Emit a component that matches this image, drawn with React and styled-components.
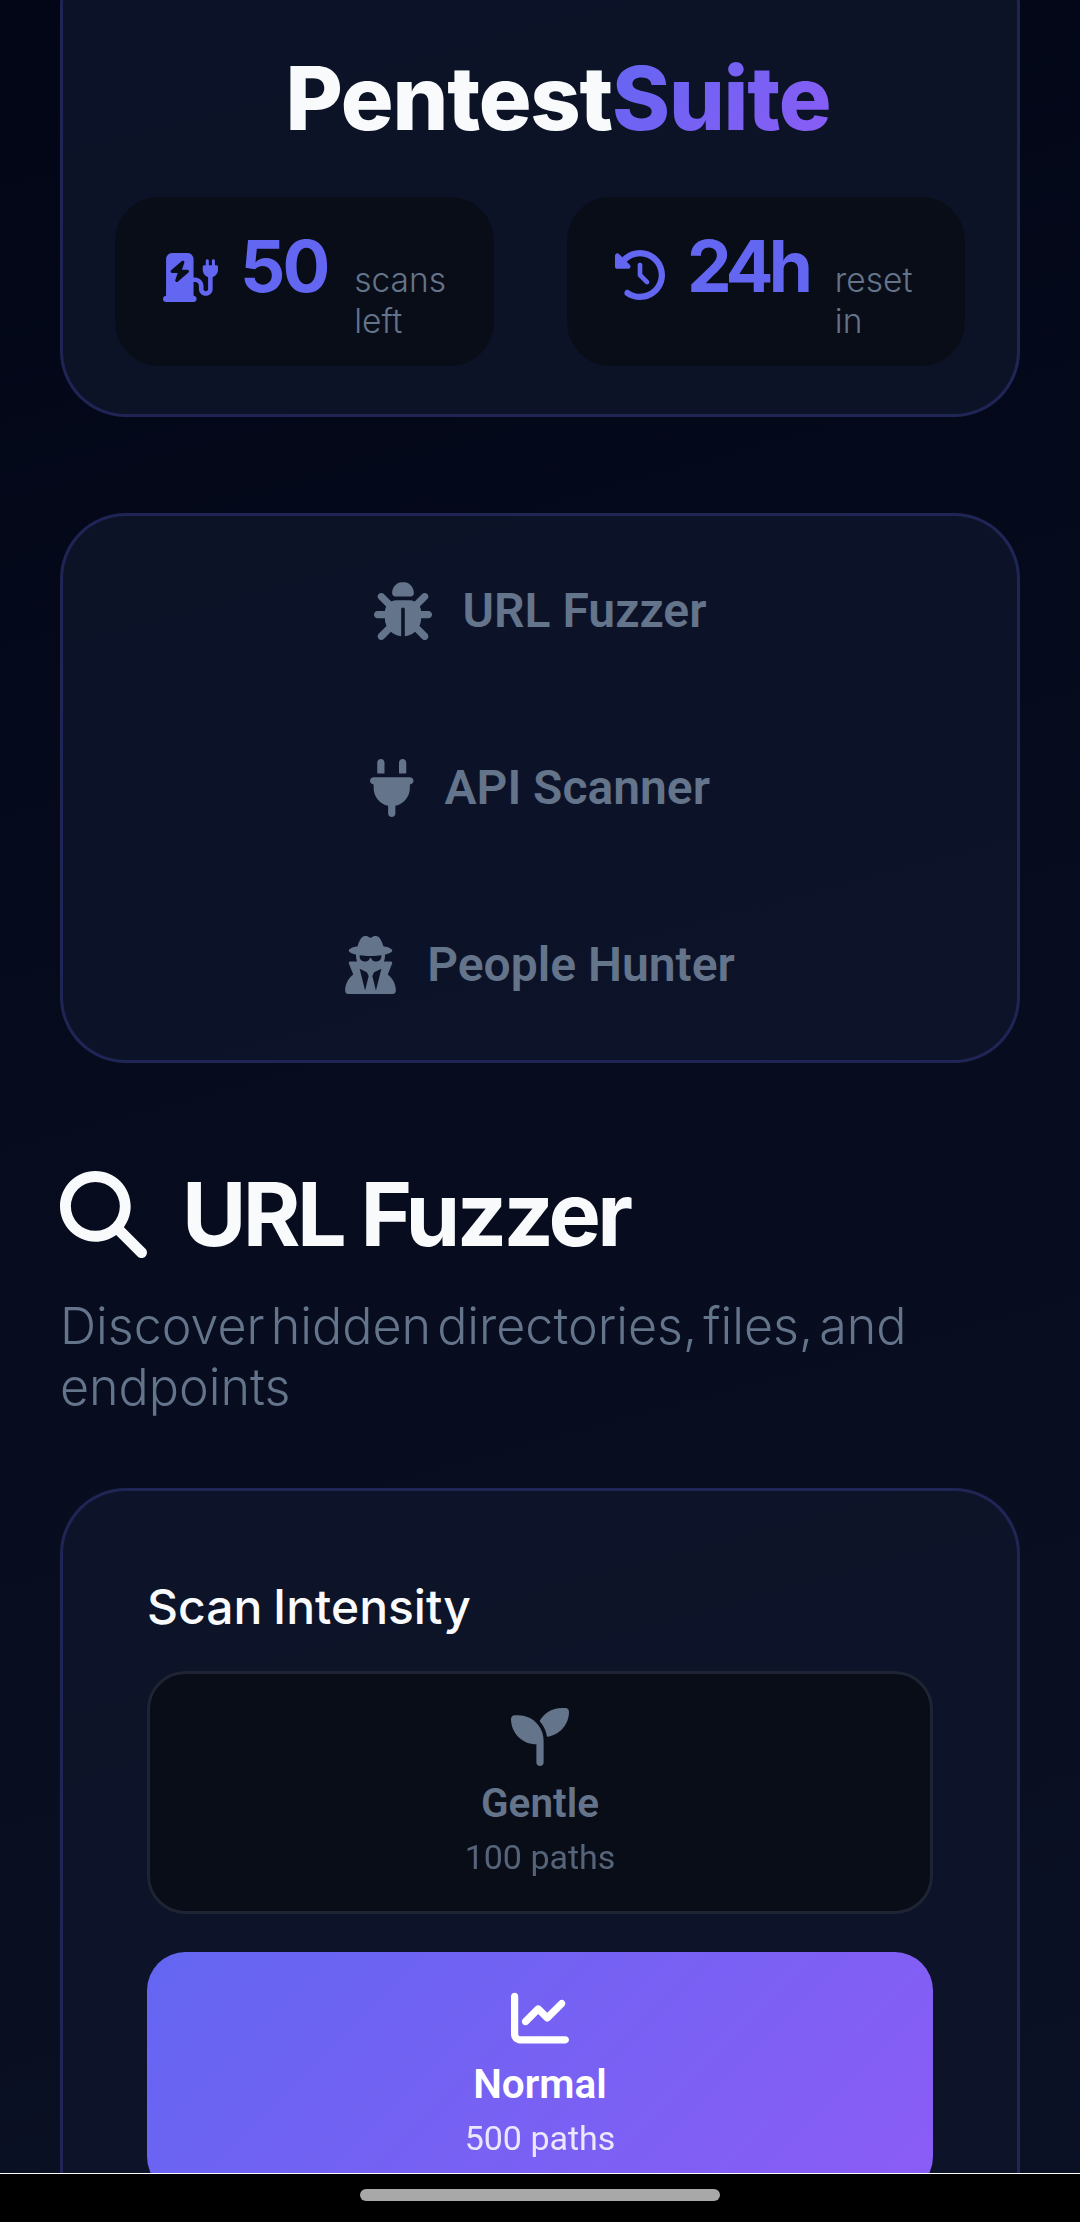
import React from 'react'
import styled, { createGlobalStyle } from 'styled-components'
import {
    FaBug,
    FaChargingStation,
    FaChartLine,
    FaClockRotateLeft,
    FaMagnifyingGlass,
    FaPlug,
    FaSeedling,
    FaUserSecret,
} from 'react-icons/fa6'

const GlobalStyle = createGlobalStyle`
    html, body {
        margin: 0;
        padding: 0;
        background: #000;
    }
    * {
        box-sizing: border-box;
    }
`

const Screen = styled.div`
    width: 1080px;
    height: 2222px;
    display: flex;
    flex-direction: column;
    overflow: hidden;
    font-family: "Inter", "Liberation Sans", sans-serif;
`

const Viewport = styled.main`
    height: 2173px;
    overflow: hidden;
    padding: 0 60px;
    background: linear-gradient(165deg, #020617 0%, #0b1124 100%);
`

const Card = styled.section`
    border: 3px solid rgba(99, 102, 241, 0.22);
    border-radius: 66px;
    background: rgba(14, 21, 42, 0.85);
`

const HeaderCard = styled(Card)`
    margin-top: -60px;
    height: 477px;
    padding: 102px 52px 0;
`

const Title = styled.h1`
    margin: 0;
    padding-left: 36px;
    text-align: center;
    font-size: 88px;
    line-height: 106px;
    font-weight: 800;
    letter-spacing: -1.2px;
    color: #f8fafc;
`

const Accent = styled.span`
    background: linear-gradient(135deg, #6366f1, #8b5cf6);
    -webkit-background-clip: text;
    background-clip: text;
    color: transparent;
`

const Stats = styled.div`
    display: grid;
    grid-template-columns: 379fr 398fr;
    gap: 73px;
    margin-top: 46px;
`

const Stat = styled.div`
    height: 169px;
    border-radius: 44px;
    background: #090d18;
    display: flex;
    align-items: flex-start;
    padding: 26px 0 0 48px;
    color: #6366f1;
`

const StatIcon = styled.span`
    display: flex;
    margin: 27px 22px 0 0;
`

const StatValue = styled.span`
    font-size: 71px;
    line-height: 86px;
    font-weight: 700;
    letter-spacing: ${props => props.$tracking}px;
    margin-right: 27px;
`

const StatLabel = styled.span`
    font-size: 33.5px;
    line-height: 41px;
    font-weight: 300;
    color: #64748b;
    width: 92px;
    margin-top: 37px;
`

const NavCard = styled(Card)`
    margin-top: 96px;
    height: 550px;
    padding: 6px 0;
    display: flex;
    flex-direction: column;
`

const NavItem = styled.div`
    height: 177px;
    display: flex;
    align-items: center;
    justify-content: center;
    gap: 31px;
    font-family: "Roboto", sans-serif;
    font-size: 48px;
    font-weight: 600;
    color: #64748b;

    svg {
        height: 58px;
        width: ${props => props.$iconWidth}px;
    }
`

const Heading = styled.h2`
    margin: 108px 0 0;
    display: flex;
    align-items: center;
    gap: 35px;
    font-size: 88px;
    line-height: 87px;
    font-weight: 700;
    letter-spacing: -3.6px;
    color: #f8fafc;
`

const Subtitle = styled.p`
    margin: 37px 0 0;
    font-size: 50.2px;
    line-height: 61px;
    font-weight: 300;
    word-spacing: -8px;
    color: #64748b;
`

const ScanCard = styled(Card)`
    margin-top: 71px;
    height: 900px;
    padding: 88px 84px;
`

const ScanLabel = styled.h3`
    margin: 0 0 36px;
    font-size: 48px;
    line-height: 56px;
    font-weight: 500;
    word-spacing: -2px;
    color: #f8fafc;
`

const Options = styled.div`
    display: flex;
    flex-direction: column;
    gap: 38px;
`

const Option = styled.div`
    height: 243px;
    border-radius: 38.5px;
    display: flex;
    flex-direction: column;
    align-items: center;
    justify-content: center;
    font-family: "Roboto", sans-serif;
    color: ${props => (props.$active ? '#fff' : '#64748b')};
    background: ${props => (props.$active ? 'linear-gradient(135deg, #6366f1, #8b5cf6)' : '#090d18')};
    border: ${props => (props.$active ? 'none' : '3px solid #1e2433')};
`

const OptionName = styled.span`
    margin-top: 14px;
    font-size: 40.5px;
    line-height: 46px;
    font-weight: 600;
`

const OptionPaths = styled.span`
    margin-top: 11px;
    font-size: 34px;
    line-height: 40px;
    opacity: 0.85;
`

const NavBar = styled.footer`
    flex: 1;
    background: #000;
    border-top: 1px solid #fff;
    display: flex;
    justify-content: center;
    padding-top: 15px;
`

const Handle = styled.div`
    width: 360px;
    height: 12px;
    border-radius: 6px;
    background: #a8a8a8;
`

const navItems = [
    { name: 'URL Fuzzer', Icon: FaBug, iconWidth: 58 },
    { name: 'API Scanner', Icon: FaPlug, iconWidth: 43.5 },
    { name: 'People Hunter', Icon: FaUserSecret, iconWidth: 51 },
]

const options = [
    { name: 'Gentle', paths: '100 paths', Icon: FaSeedling },
    { name: 'Normal', paths: '500 paths', Icon: FaChartLine, active: true },
]

export default function App() {
    return (
        <Screen>
            <GlobalStyle />
            <Viewport>
                <HeaderCard>
                    <Title>Pentest<Accent>Suite</Accent></Title>
                    <Stats>
                        <Stat>
                            <StatIcon><FaChargingStation size={55} /></StatIcon>
                            <StatValue $tracking={-3}>50</StatValue>
                            <StatLabel>scans left</StatLabel>
                        </Stat>
                        <Stat>
                            <StatIcon><FaClockRotateLeft size={50} /></StatIcon>
                            <StatValue $tracking={-5}>24h</StatValue>
                            <StatLabel>reset in</StatLabel>
                        </Stat>
                    </Stats>
                </HeaderCard>

                <NavCard>
                    {navItems.map(({ name, Icon, iconWidth }) => (
                        <NavItem key={name} $iconWidth={iconWidth}>
                            <Icon />
                            {name}
                        </NavItem>
                    ))}
                </NavCard>

                <Heading><FaMagnifyingGlass size={87} />URL Fuzzer</Heading>
                <Subtitle>Discover hidden directories, files, and endpoints</Subtitle>

                <ScanCard>
                    <ScanLabel>Scan Intensity</ScanLabel>
                    <Options>
                        {options.map(({ name, paths, Icon, active }) => (
                            <Option key={name} $active={active}>
                                <Icon size={58} />
                                <OptionName>{name}</OptionName>
                                <OptionPaths>{paths}</OptionPaths>
                            </Option>
                        ))}
                    </Options>
                </ScanCard>
            </Viewport>
            <NavBar><Handle /></NavBar>
        </Screen>
    )
}
